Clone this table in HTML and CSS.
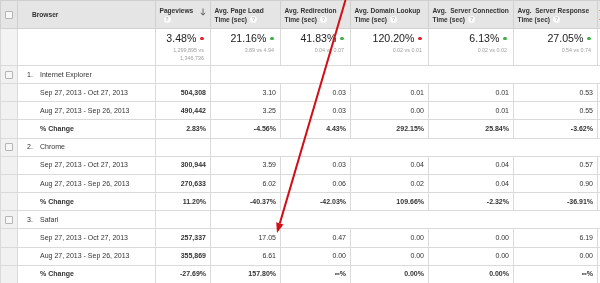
FILE: index.html
```html
<!DOCTYPE html>
<html>
<head>
<meta charset="utf-8">
<link rel="stylesheet" href="styles.css">
</head>
<body>
<div class="report">
<table class="grid">
<colgroup>
<col class="c-chk"><col class="c-name"><col class="c-pv"><col class="c-load"><col class="c-redir"><col class="c-dns"><col class="c-conn"><col class="c-resp"><col class="c-more">
</colgroup>
<thead>
<tr class="head">
<th class="chk"><span class="box"></span></th>
<th class="hname">Browser</th>
<th class="hm"><div class="htop"><span>Pageviews</span><svg class="sort" width="6" height="8" viewBox="0 0 6 8"><path d="M3 0.5V7M0.8 4.8L3 7.2L5.2 4.8" fill="none" stroke="#555" stroke-width="0.9"/></svg></div><div class="hsub"><span class="help pv">?</span></div></th>
<th class="hm"><div>Avg. Page Load</div><div class="hsub">Time (sec) <span class="help">?</span></div></th>
<th class="hm"><div>Avg. Redirection</div><div class="hsub">Time (sec) <span class="help">?</span></div></th>
<th class="hm"><div>Avg. Domain Lookup</div><div class="hsub">Time (sec) <span class="help">?</span></div></th>
<th class="hm"><div>Avg.&nbsp; Server Connection</div><div class="hsub">Time (sec) <span class="help">?</span></div></th>
<th class="hm"><div>Avg.&nbsp; Server Response</div><div class="hsub">Time (sec) <span class="help">?</span></div></th>
<th class="hm more"><span class="tick"></span><span class="tick"></span></th>
</tr>
</thead>
<tbody>
<tr class="sum">
<td class="chk"></td>
<td></td>
<td class="sv"><div class="big">3.48% <i class="dot red"></i></div><div class="cmp">1,299,895 vs<br>1,346,736</div></td>
<td class="sv"><div class="big">21.16% <i class="dot green"></i></div><div class="cmp">3.89 vs 4.94</div></td>
<td class="sv"><div class="big">41.83% <i class="dot green"></i></div><div class="cmp">0.04 vs 0.07</div></td>
<td class="sv"><div class="big">120.20% <i class="dot red"></i></div><div class="cmp">0.02 vs 0.01</div></td>
<td class="sv"><div class="big">6.13% <i class="dot green"></i></div><div class="cmp">0.02 vs 0.02</div></td>
<td class="sv"><div class="big">27.05% <i class="dot green"></i></div><div class="cmp">0.54 vs 0.74</div></td>
<td class="sv"></td>
</tr>

<tr class="grp">
<td class="chk"><span class="box"></span></td>
<td class="gname"><span class="idx">1.</span>Internet Explorer</td>
<td></td>
<td colspan="6" class="rest"></td>
</tr>
<tr class="row">
<td class="chk"></td><td class="lbl">Sep 27, 2013 - Oct 27, 2013</td>
<td class="n b">504,308</td><td class="n">3.10</td><td class="n">0.03</td><td class="n">0.01</td><td class="n">0.01</td><td class="n">0.53</td><td class="n"></td>
</tr>
<tr class="row">
<td class="chk"></td><td class="lbl">Aug 27, 2013 - Sep 26, 2013</td>
<td class="n b">490,442</td><td class="n">3.25</td><td class="n">0.03</td><td class="n">0.00</td><td class="n">0.01</td><td class="n">0.55</td><td class="n"></td>
</tr>
<tr class="row chg">
<td class="chk"></td><td class="lbl">% Change</td>
<td class="n">2.83%</td><td class="n">-4.56%</td><td class="n">4.43%</td><td class="n">292.15%</td><td class="n">25.84%</td><td class="n">-3.62%</td><td class="n"></td>
</tr>

<tr class="grp">
<td class="chk"><span class="box"></span></td>
<td class="gname"><span class="idx">2.</span>Chrome</td>
<td></td>
<td colspan="6" class="rest"></td>
</tr>
<tr class="row">
<td class="chk"></td><td class="lbl">Sep 27, 2013 - Oct 27, 2013</td>
<td class="n b">300,944</td><td class="n">3.59</td><td class="n">0.03</td><td class="n">0.04</td><td class="n">0.04</td><td class="n">0.57</td><td class="n"></td>
</tr>
<tr class="row">
<td class="chk"></td><td class="lbl">Aug 27, 2013 - Sep 26, 2013</td>
<td class="n b">270,633</td><td class="n">6.02</td><td class="n">0.06</td><td class="n">0.02</td><td class="n">0.04</td><td class="n">0.90</td><td class="n"></td>
</tr>
<tr class="row chg">
<td class="chk"></td><td class="lbl">% Change</td>
<td class="n">11.20%</td><td class="n">-40.37%</td><td class="n">-42.03%</td><td class="n">109.66%</td><td class="n">-2.32%</td><td class="n">-36.91%</td><td class="n"></td>
</tr>

<tr class="grp">
<td class="chk"><span class="box"></span></td>
<td class="gname"><span class="idx">3.</span>Safari</td>
<td></td>
<td colspan="6" class="rest"></td>
</tr>
<tr class="row">
<td class="chk"></td><td class="lbl">Sep 27, 2013 - Oct 27, 2013</td>
<td class="n b">257,337</td><td class="n">17.05</td><td class="n">0.47</td><td class="n">0.00</td><td class="n">0.00</td><td class="n">6.19</td><td class="n"></td>
</tr>
<tr class="row">
<td class="chk"></td><td class="lbl">Aug 27, 2013 - Sep 26, 2013</td>
<td class="n b">355,869</td><td class="n">6.61</td><td class="n">0.00</td><td class="n">0.00</td><td class="n">0.00</td><td class="n">0.00</td><td class="n"></td>
</tr>
<tr class="row chg">
<td class="chk"></td><td class="lbl">% Change</td>
<td class="n">-27.69%</td><td class="n">157.80%</td><td class="n">∞%</td><td class="n">0.00%</td><td class="n">0.00%</td><td class="n">∞%</td><td class="n"></td>
</tr>
</tbody>
</table>

<svg class="arrow" width="600" height="283" viewBox="0 0 600 283">
<line x1="345.5" y1="0" x2="279.8" y2="223.4" stroke="#d20f16" stroke-width="2"/>
<polygon points="277,233 283.4,224.5 276.2,222.3" fill="#d20f16"/>
</svg>
</div>
</body>
</html>
```
FILE: styles.css
```css
html, body {
  margin: 0;
  padding: 0;
  overflow: hidden;
  background: #fff;
}
body {
  font-family: "Liberation Sans", Arial, sans-serif;
  font-size: 7px;
  color: #333;
}
.report {
  position: relative;
  width: 600px;
  height: 283px;
  overflow: hidden;
}
.grid {
  border-collapse: collapse;
  table-layout: fixed;
  width: 657px;
  will-change: transform;
}
.c-chk { width: 17px; }
.c-name { width: 138px; }
.c-pv { width: 55px; }
.c-load { width: 70px; }
.c-redir { width: 70px; }
.c-dns { width: 78px; }
.c-conn { width: 85px; }
.c-resp { width: 84px; }
.c-more { width: 60px; }

.grid th, .grid td {
  border: 1px solid #dadada;
  padding: 0;
  white-space: nowrap;
  overflow: hidden;
  color: #333;
}

/* header */
.head { height: 28px; }
.head th {
  background: #e5e5e5;
  border-color: #d0d0d0;
  border-top: 1px solid #cfcfcf;
  text-align: left;
  vertical-align: top;
  font-weight: bold;
  font-size: 6.6px;
}
.head th.chk { vertical-align: middle; text-align: center; }
.hname { padding: 10px 0 0 14px !important; }
.hm { padding: 5px 3px 0 3.5px !important; line-height: 9px; }
.htop { display: flex; justify-content: space-between; align-items: flex-start; }
.sort { margin-top: 2px; margin-right: 1px; }
.hsub { display: flex; align-items: center; gap: 3px; }
.help {
  display: inline-flex;
  align-items: center;
  justify-content: center;
  width: 7px;
  height: 7px;
  border-radius: 50%;
  background: #fafafa;
  color: #b5b5b5;
  font-size: 5px;
  font-weight: bold;
}
.help.pv { margin-left: 4px; }
.more { padding: 9px 0 0 1px !important; }
.tick {
  display: block;
  width: 3px;
  height: 1px;
  background: #eaa24a;
  margin-bottom: 8px;
}

.box {
  display: inline-block;
  width: 6px;
  height: 6px;
  border: 1px solid #b4b4b4;
  border-radius: 1px;
  background: #f7f7f7;
  vertical-align: middle;
}

/* summary row */
.sum { height: 37px; }
.sum td { vertical-align: top; }
.sum td.chk { background: #f3f3f3; }
.sv { text-align: right; padding: 4px 6px 0 0 !important; }
.big {
  font-size: 10.6px;
  color: #222;
  line-height: 11px;
  display: flex;
  justify-content: flex-end;
  align-items: center;
  gap: 4px;
}
.cmp {
  font-size: 5.4px;
  color: #a0a0a0;
  line-height: 8px;
  margin-top: 1.5px;
}
.grid td.sv .cmp { color: #a0a0a0; }
.dot {
  display: inline-block;
  width: 3.6px;
  height: 3.6px;
  border-radius: 50%;
}
.dot.red { background: #e0232b; }
.dot.green { background: #3fae49; }

/* body rows */
.grp, .row { height: 18.17px; }
.grp td, .row td {
  vertical-align: middle;
  line-height: 8px;
}
.chk { background: #f1f1f1; text-align: center; }
.gname { padding-left: 9px !important; }
.idx { display: inline-block; width: 13px; }
.lbl { padding-left: 22px !important; }
.n { text-align: right; padding-right: 4px !important; }
.b { font-weight: bold; }
.chg td { font-weight: bold; }

.arrow {
  position: absolute;
  left: 0;
  top: 0;
  pointer-events: none;
}
```
